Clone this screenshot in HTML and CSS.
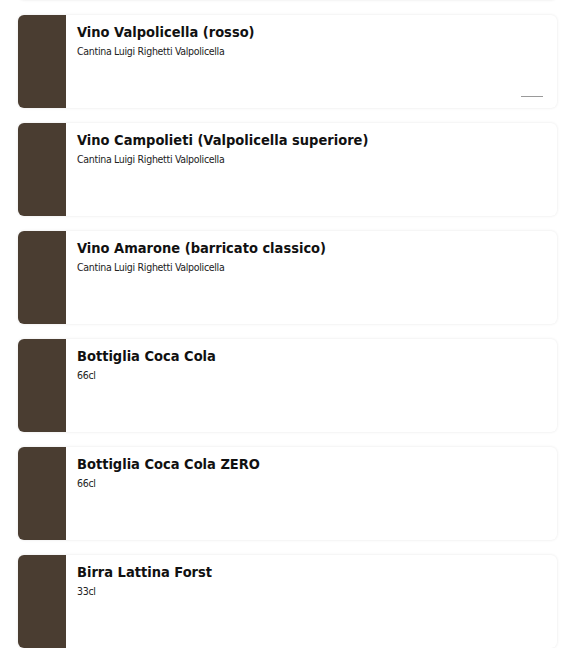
FILE: index.html
```html
<!DOCTYPE html>
<html>
<head>
<meta charset="utf-8">
<link rel="stylesheet" href="styles.css">
</head>
<body>
<div class="list">
  <div class="card card-prev"><div class="thumb"></div><div class="info"><div class="title">&nbsp;</div></div></div>
  <div class="card">
    <div class="thumb"></div>
    <div class="info">
      <div class="title">Vino Valpolicella (rosso)</div>
      <div class="sub">Cantina Luigi Righetti Valpolicella</div>
      <div class="mark"></div>
    </div>
  </div>
  <div class="card">
    <div class="thumb"></div>
    <div class="info">
      <div class="title">Vino Campolieti (Valpolicella superiore)</div>
      <div class="sub">Cantina Luigi Righetti Valpolicella</div>
    </div>
  </div>
  <div class="card">
    <div class="thumb"></div>
    <div class="info">
      <div class="title">Vino Amarone (barricato classico)</div>
      <div class="sub">Cantina Luigi Righetti Valpolicella</div>
    </div>
  </div>
  <div class="card">
    <div class="thumb"></div>
    <div class="info">
      <div class="title">Bottiglia Coca Cola</div>
      <div class="sub">66cl</div>
    </div>
  </div>
  <div class="card">
    <div class="thumb"></div>
    <div class="info">
      <div class="title">Bottiglia Coca Cola ZERO</div>
      <div class="sub">66cl</div>
    </div>
  </div>
  <div class="card">
    <div class="thumb"></div>
    <div class="info">
      <div class="title">Birra Lattina Forst</div>
      <div class="sub">33cl</div>
    </div>
  </div>
</div>
</body>
</html>
```
FILE: styles.css
```css
html, body {
  margin: 0;
  padding: 0;
  background: #ffffff;
}
body {
  font-family: "DejaVu Sans", sans-serif;
  color: #111;
}
.list {
  display: flex;
  flex-direction: column;
  gap: 15px;
  padding: 0 22px 0 18px;
  margin-top: -93px;
}
.card {
  display: flex;
  height: 93px;
  background: #fff;
  border-radius: 6px;
  box-shadow: 0 0 3px rgba(0, 0, 0, 0.10);
  flex-shrink: 0;
}
.thumb {
  width: 48px;
  flex-shrink: 0;
  background: #4a3d31;
  border-radius: 6px 0 0 6px;
}
.info {
  position: relative;
  flex: 1;
  padding: 8px 11px;
}
.title {
  font-family: "DejaVu Sans Condensed", "DejaVu Sans", sans-serif;
  font-size: 14.5px;
  font-weight: bold;
  line-height: 19px;
  color: #111;
}
.sub {
  font-family: "DejaVu Sans Condensed", "DejaVu Sans", sans-serif;
  font-size: 10.5px;
  line-height: 14px;
  margin-top: 2px;
  color: #222;
  letter-spacing: -0.3px;
}
.mark {
  position: absolute;
  right: 14px;
  bottom: 11px;
  width: 22px;
  height: 1px;
  background: #9a9a9a;
}
```
